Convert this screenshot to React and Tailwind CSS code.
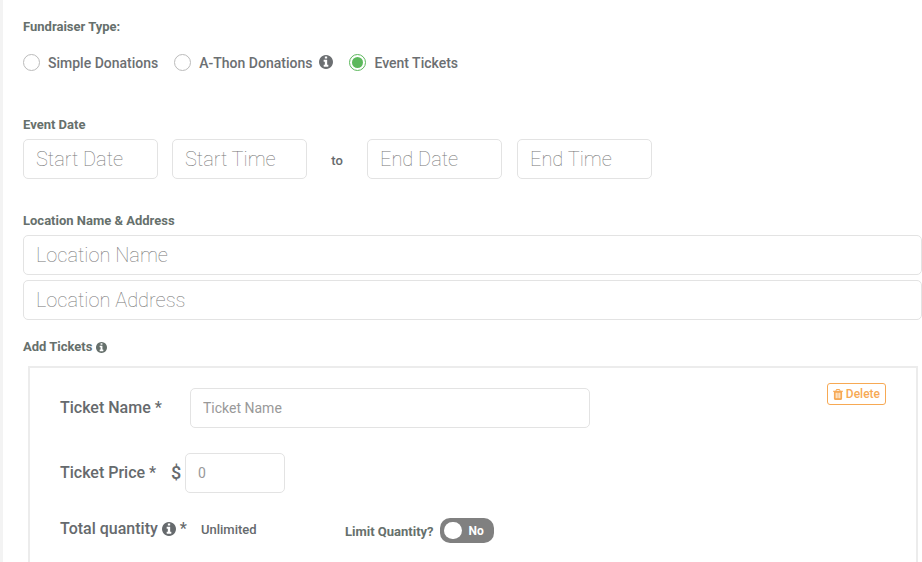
import React, { useState } from "react";

const fundraiserTypes = [
  { value: "simple", label: "Simple Donations" },
  { value: "athon", label: "A-Thon Donations", info: true },
  { value: "tickets", label: "Event Tickets" },
];

const inputClass =
  "block h-10 rounded-[5px] border border-[#e3e3e3] bg-white px-3 text-[#555] outline-none";
const largeInput = "text-xl font-thin placeholder:text-[#777]";
const smallInput = "text-sm placeholder:text-[#999]";
const headingClass = "text-[13px] leading-5 font-bold text-[#66706c]";

const InfoIcon = ({ className }) => (
  <svg
    viewBox="0 128 1536 1536"
    fill="currentColor"
    aria-hidden="true"
    className={className}
  >
    <path d="M1024 1376v-160q0-14-9-23t-23-9h-96v-512q0-14-9-23t-23-9h-320q-14 0-23 9t-9 23v160q0 14 9 23t23 9h96v320h-96q-14 0-23 9t-9 23v160q0 14 9 23t23 9h448q14 0 23-9t9-23zM896 480v-160q0-14-9-23t-23-9h-192q-14 0-23 9t-9 23v160q0 14 9 23t23 9h192q14 0 23-9t9-23zM1536 896q0 209-103 385.5t-279.5 279.5-385.5 103-385.5-103-279.5-279.5-103-385.5 103-385.5 279.5-279.5 385.5-103 385.5 103 279.5 279.5 103 385.5z" />
  </svg>
);

const TrashIcon = ({ className }) => (
  <svg
    viewBox="0 128 1408 1536"
    fill="currentColor"
    aria-hidden="true"
    className={className}
  >
    <path d="M512 1376v-704q0-14-9-23t-23-9h-64q-14 0-23 9t-9 23v704q0 14 9 23t23 9h64q14 0 23-9t9-23zm256 0v-704q0-14-9-23t-23-9h-64q-14 0-23 9t-9 23v704q0 14 9 23t23 9h64q14 0 23-9t9-23zm256 0v-704q0-14-9-23t-23-9h-64q-14 0-23 9t-9 23v704q0 14 9 23t23 9h64q14 0 23-9t9-23zm-544-992h448l-48-117q-7-9-17-11h-317q-10 2-17 11zm928 32v64q0 14-9 23t-23 9h-96v948q0 83-47 143.5t-113 60.5h-832q-66 0-113-58.5t-47-141.5v-952h-96q-14 0-23-9t-9-23v-64q0-14 9-23t23-9h309l70-167q15-37 54-63t79-26h320q40 0 79 26t54 63l70 167h309q14 0 23 9t9 23z" />
  </svg>
);

const Field = ({ label, className, ...props }) => (
  <input
    type="text"
    aria-label={label}
    placeholder={label}
    className={`${inputClass} ${largeInput} ${className}`}
    {...props}
  />
);

const TicketCard = () => {
  const [limited, setLimited] = useState(false);

  return (
    <div className="relative ml-[5px] mr-1 mt-[9px] border-2 border-[#ececec] px-[30px] pt-5 pb-10 text-[#666a6d]">
      <button
        type="button"
        className="absolute top-[15px] right-[30px] flex h-[22px] items-center gap-[3px] rounded-[3px] border border-[#f7a954] px-[5px] text-xs font-medium text-[#f7a954]"
      >
        <TrashIcon className="h-[11px] w-[10px]" />
        Delete
      </button>

      <div className="flex items-center">
        <label htmlFor="ticket-name" className="w-[130px] font-medium">
          Ticket Name *
        </label>
        <input
          id="ticket-name"
          type="text"
          placeholder="Ticket Name"
          className={`${inputClass} ${smallInput} w-[400px]`}
        />
      </div>

      <div className="mt-[25px] flex items-center">
        <label htmlFor="ticket-price" className="w-[111px] font-medium">
          Ticket Price *
        </label>
        <span className="w-[14px] text-lg font-medium">$</span>
        <input
          id="ticket-price"
          type="text"
          placeholder="0"
          className={`${inputClass} ${smallInput} w-[100px]`}
        />
      </div>

      <div className="mt-[25px] flex h-[25px] items-center">
        <div className="flex w-[285px] items-center pb-1">
          <span className="flex w-[141px] items-center gap-1 font-medium">
            Total quantity
            <InfoIcon className="size-[14px]" />*
          </span>
          <span className="pt-0.5 text-[13px] font-medium">Unlimited</span>
        </div>
        <label htmlFor="limit-quantity" className={`${headingClass} pt-0.5`}>
          Limit Quantity?
        </label>
        <button
          id="limit-quantity"
          type="button"
          role="switch"
          aria-checked={limited}
          onClick={() => setLimited(!limited)}
          className="ml-1.5 flex h-[25px] w-[54px] items-center gap-[7px] rounded-[10px] bg-[#808080] px-1 text-xs font-bold text-white"
        >
          <span className="h-[17px] w-[18px] rounded-full bg-white" />
          {limited ? "Yes" : "No"}
        </button>
      </div>
    </div>
  );
};

const App = () => {
  const [type, setType] = useState("tickets");

  return (
    <form className="h-screen overflow-hidden border-l-[3px] border-[#f3f3f3] bg-white pl-5 pt-[17px] font-['Roboto',sans-serif]">
      <fieldset>
        <legend className={headingClass}>Fundraiser Type:</legend>
        <div className="mt-[15px] flex h-5 items-center gap-4">
          {fundraiserTypes.map((item) => (
            <label
              key={item.value}
              className="flex items-center text-sm font-medium text-[#6c6f72]"
            >
              <input
                type="radio"
                name="fundraiser-type"
                value={item.value}
                checked={type === item.value}
                onChange={() => setType(item.value)}
                className="mr-2 size-[17px] appearance-none rounded-full border border-[#bbb] bg-white bg-clip-content p-[2px] checked:border-[#5cb85c] checked:bg-[#5cb85c]"
              />
              <span className="pt-0.5">{item.label}</span>
              {item.info && <InfoIcon className="ml-[7px] size-[14px]" />}
            </label>
          ))}
        </div>
      </fieldset>

      <h2 className={`${headingClass} mt-[43px]`}>Event Date</h2>
      <div className="mt-1 flex items-center">
        <Field label="Start Date" className="mr-[14px] w-[135px]" />
        <Field label="Start Time" className="w-[135px]" />
        <span className="w-[60px] pt-1 text-center text-[13px] font-medium text-[#666a6d]">
          to
        </span>
        <Field label="End Date" className="mr-[15px] w-[135px]" />
        <Field label="End Time" className="w-[135px]" />
      </div>

      <h2 className={`${headingClass} mt-8`}>Location Name &amp; Address</h2>
      <div className="mt-1 flex flex-col gap-[5px]">
        <Field label="Location Name" className="w-full" />
        <Field label="Location Address" className="w-full" />
      </div>

      <h2 className={`${headingClass} mt-[17px] flex items-center gap-1`}>
        Add Tickets
        <InfoIcon className="size-[11px]" />
      </h2>
      <TicketCard />
    </form>
  );
};

export default App;
